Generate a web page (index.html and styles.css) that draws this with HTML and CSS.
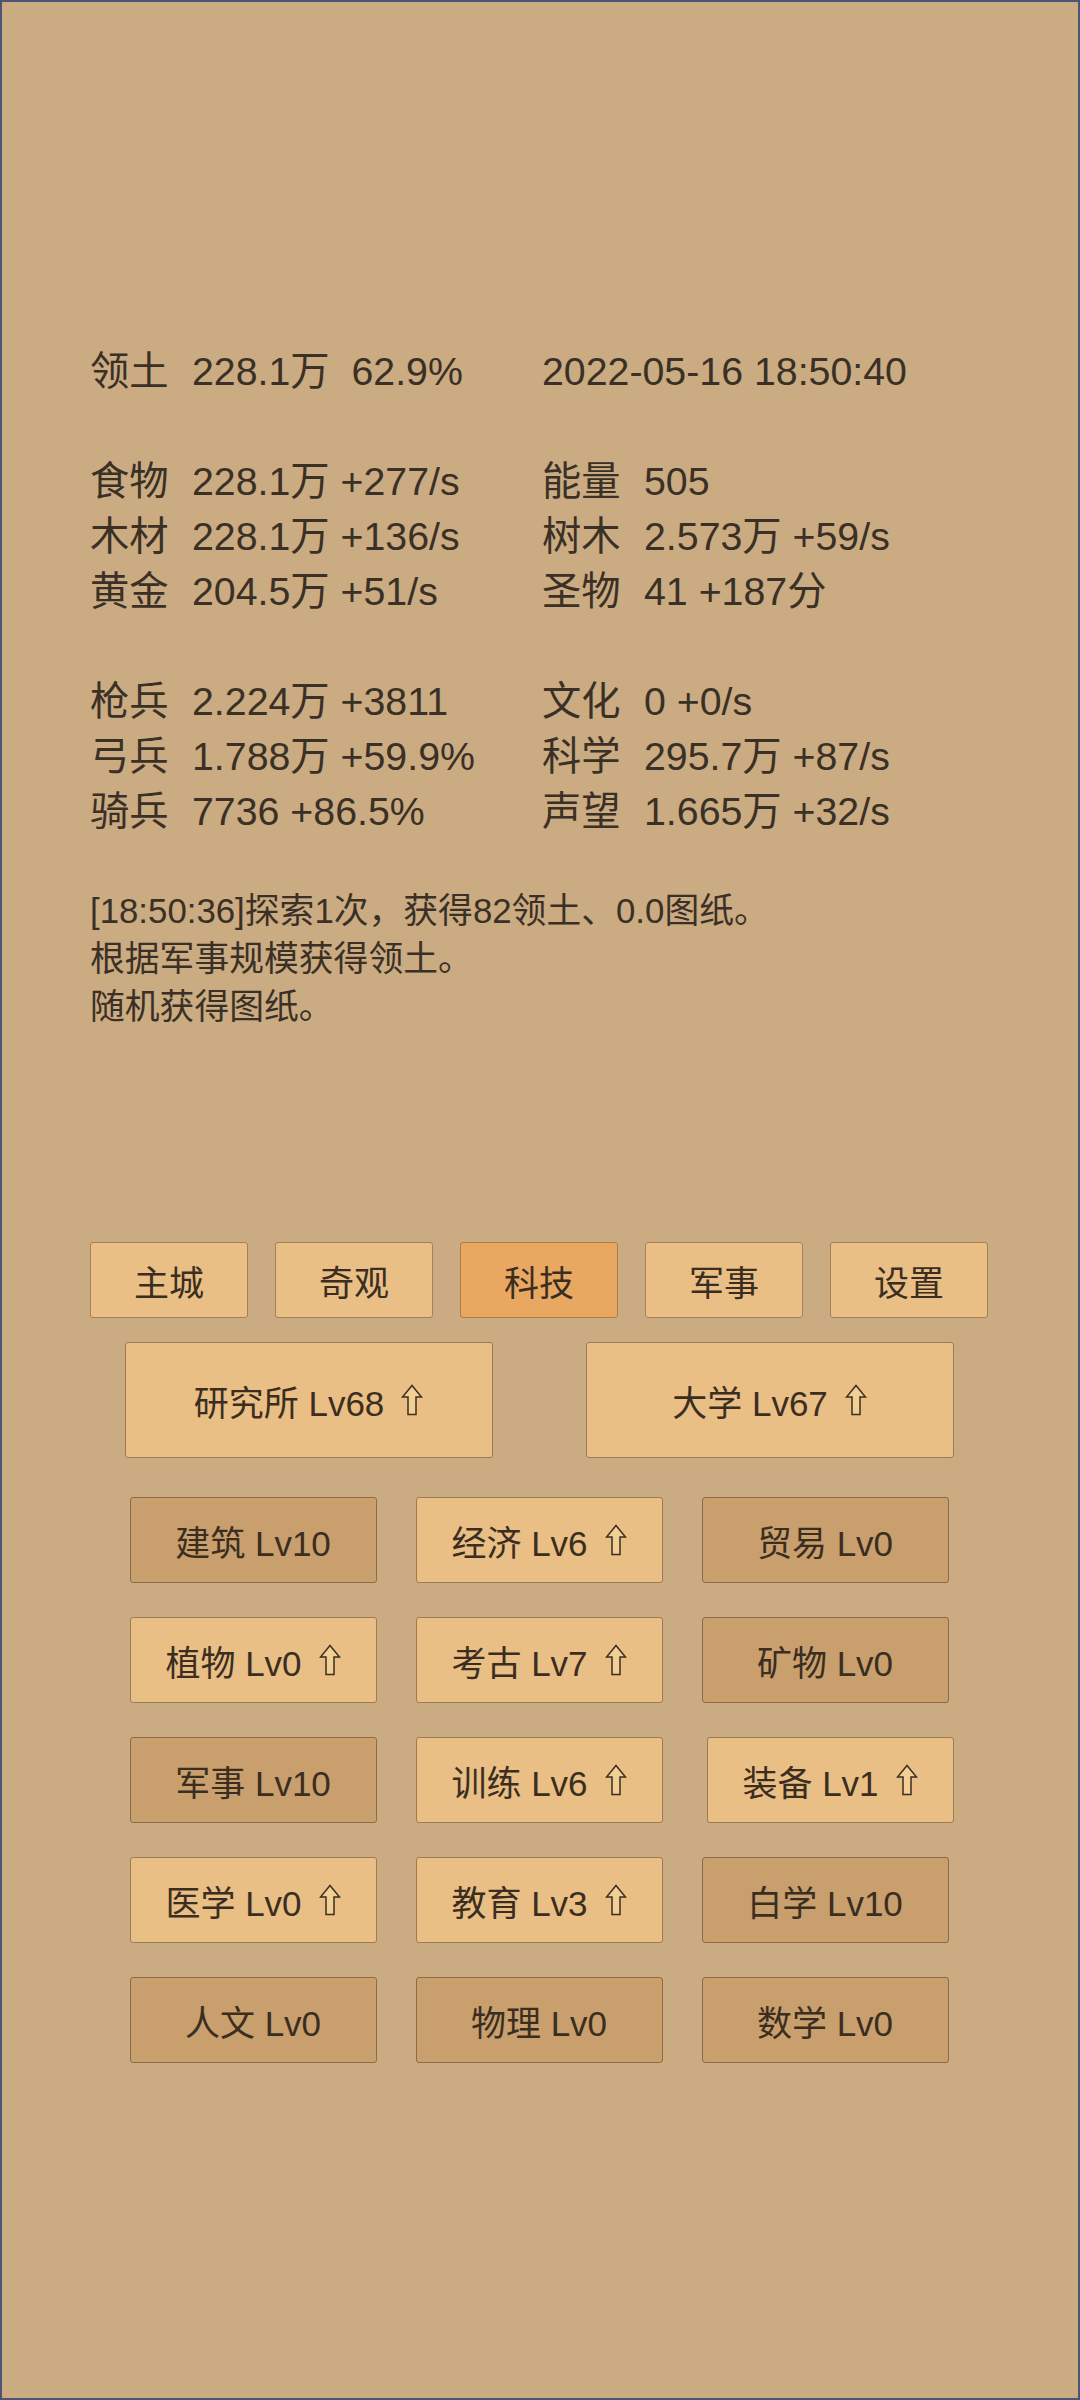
FILE: index.html
```html
<!DOCTYPE html>
<html lang="zh-CN">
<head>
<meta charset="utf-8">
<title>科技</title>
<link rel="stylesheet" href="styles.css">
</head>
<body>
<div class="screen">
  <section class="stats">
    <div class="cell"><span class="lbl">领土</span><span class="val">228.1万&nbsp; 62.9%</span></div>
    <div class="cell"><span class="val">2022-05-16 18:50:40</span></div>
    <div class="spacer"></div>
    <div class="cell"><span class="lbl">食物</span><span class="val">228.1万 +277/s</span></div>
    <div class="cell"><span class="lbl">能量</span><span class="val">505</span></div>
    <div class="cell"><span class="lbl">木材</span><span class="val">228.1万 +136/s</span></div>
    <div class="cell"><span class="lbl">树木</span><span class="val">2.573万 +59/s</span></div>
    <div class="cell"><span class="lbl">黄金</span><span class="val">204.5万 +51/s</span></div>
    <div class="cell"><span class="lbl">圣物</span><span class="val">41 +187分</span></div>
    <div class="spacer"></div>
    <div class="cell"><span class="lbl">枪兵</span><span class="val">2.224万 +3811</span></div>
    <div class="cell"><span class="lbl">文化</span><span class="val">0 +0/s</span></div>
    <div class="cell"><span class="lbl">弓兵</span><span class="val">1.788万 +59.9%</span></div>
    <div class="cell"><span class="lbl">科学</span><span class="val">295.7万 +87/s</span></div>
    <div class="cell"><span class="lbl">骑兵</span><span class="val">7736 +86.5%</span></div>
    <div class="cell"><span class="lbl">声望</span><span class="val">1.665万 +32/s</span></div>
  </section>

  <section class="log">
    <p>[18:50:36]探索1次，获得82领土、0.0图纸。</p>
    <p>根据军事规模获得领土。</p>
    <p>随机获得图纸。</p>
  </section>

  <nav class="tabs">
    <div class="tab">主城</div>
    <div class="tab">奇观</div>
    <div class="tab active">科技</div>
    <div class="tab">军事</div>
    <div class="tab">设置</div>
  </nav>

  <section class="big-row">
    <div class="btn big">研究所 Lv68<svg class="up" viewBox="0 0 22 32"><polygon points="11,1.5 20.5,13 15,13 15,30.5 7,30.5 7,13 1.5,13"/></svg></div>
    <div class="btn big">大学 Lv67<svg class="up" viewBox="0 0 22 32"><polygon points="11,1.5 20.5,13 15,13 15,30.5 7,30.5 7,13 1.5,13"/></svg></div>
  </section>

  <section class="tech-grid">
    <div class="btn cell-btn dim">建筑 Lv10</div>
    <div class="btn cell-btn">经济 Lv6<svg class="up" viewBox="0 0 22 32"><polygon points="11,1.5 20.5,13 15,13 15,30.5 7,30.5 7,13 1.5,13"/></svg></div>
    <div class="btn cell-btn dim">贸易 Lv0</div>

    <div class="btn cell-btn">植物 Lv0<svg class="up" viewBox="0 0 22 32"><polygon points="11,1.5 20.5,13 15,13 15,30.5 7,30.5 7,13 1.5,13"/></svg></div>
    <div class="btn cell-btn">考古 Lv7<svg class="up" viewBox="0 0 22 32"><polygon points="11,1.5 20.5,13 15,13 15,30.5 7,30.5 7,13 1.5,13"/></svg></div>
    <div class="btn cell-btn dim">矿物 Lv0</div>

    <div class="btn cell-btn dim">军事 Lv10</div>
    <div class="btn cell-btn">训练 Lv6<svg class="up" viewBox="0 0 22 32"><polygon points="11,1.5 20.5,13 15,13 15,30.5 7,30.5 7,13 1.5,13"/></svg></div>
    <div class="btn cell-btn nudge">装备 Lv1<svg class="up" viewBox="0 0 22 32"><polygon points="11,1.5 20.5,13 15,13 15,30.5 7,30.5 7,13 1.5,13"/></svg></div>

    <div class="btn cell-btn">医学 Lv0<svg class="up" viewBox="0 0 22 32"><polygon points="11,1.5 20.5,13 15,13 15,30.5 7,30.5 7,13 1.5,13"/></svg></div>
    <div class="btn cell-btn">教育 Lv3<svg class="up" viewBox="0 0 22 32"><polygon points="11,1.5 20.5,13 15,13 15,30.5 7,30.5 7,13 1.5,13"/></svg></div>
    <div class="btn cell-btn dim">白学 Lv10</div>

    <div class="btn cell-btn dim">人文 Lv0</div>
    <div class="btn cell-btn dim">物理 Lv0</div>
    <div class="btn cell-btn dim">数学 Lv0</div>
  </section>
</div>
</body>
</html>
```

FILE: styles.css
```css
* { box-sizing: border-box; }

html, body {
  margin: 0;
  padding: 0;
  background: #caab82;
}

.screen {
  width: 1080px;
  height: 2400px;
  border: 2px solid #4c5674;
  background: #caab82;
  color: #3a3026;
  font-family: "Liberation Sans", "Noto Sans CJK SC", sans-serif;
  padding-top: 342px;
  overflow: hidden;
}

.stats {
  display: grid;
  grid-template-columns: 452px 1fr;
  grid-auto-rows: 55px;
  margin-left: 88px;
  font-size: 39.3px;
  line-height: 55px;
}

.stats .spacer {
  grid-column: 1 / -1;
}

.cell {
  display: flex;
  white-space: pre;
}

.lbl {
  width: 102px;
  flex: none;
}

.log {
  margin: 48px 0 0 88px;
  font-size: 34.8px;
  line-height: 48px;
}

.log p {
  margin: 0;
}

.tabs {
  display: grid;
  grid-template-columns: repeat(5, 158px);
  column-gap: 27px;
  margin: 211px 0 0 88px;
  width: 898px;
}

.tab {
  height: 76px;
  display: flex;
  align-items: center;
  justify-content: center;
  background: #e9bf85;
  border: 1.5px solid #a58159;
  border-radius: 3px;
  font-size: 35px;
  color: #3b2e21;
}

.tab.active {
  background: #e9a862;
  border-color: #b27a45;
}

.btn {
  display: flex;
  align-items: center;
  justify-content: center;
  background: #e9bf85;
  border: 1.5px solid #9d7b55;
  border-radius: 3px;
  font-size: 35px;
  color: #3b2e21;
  white-space: nowrap;
}

.btn.dim {
  background: #c89f6d;
  border-color: #8c6b47;
}

.big-row {
  display: flex;
  justify-content: center;
  gap: 93px;
  margin-top: 24px;
  margin-left: -2px;
}

.big {
  width: 368px;
  height: 116px;
}

.tech-grid {
  display: grid;
  grid-template-columns: repeat(3, 247px);
  grid-auto-rows: 86px;
  column-gap: 39px;
  row-gap: 34px;
  justify-content: center;
  margin-top: 39px;
  margin-left: -2px;
}

.cell-btn {
  width: 247px;
}

.nudge {
  margin-left: 5px;
}

.up {
  width: 22px;
  height: 32px;
  margin-left: 17px;
  flex: none;
}

.up polygon {
  fill: #f2cf94;
  stroke: #3b2e21;
  stroke-width: 1.5;
  stroke-linejoin: miter;
}
```
